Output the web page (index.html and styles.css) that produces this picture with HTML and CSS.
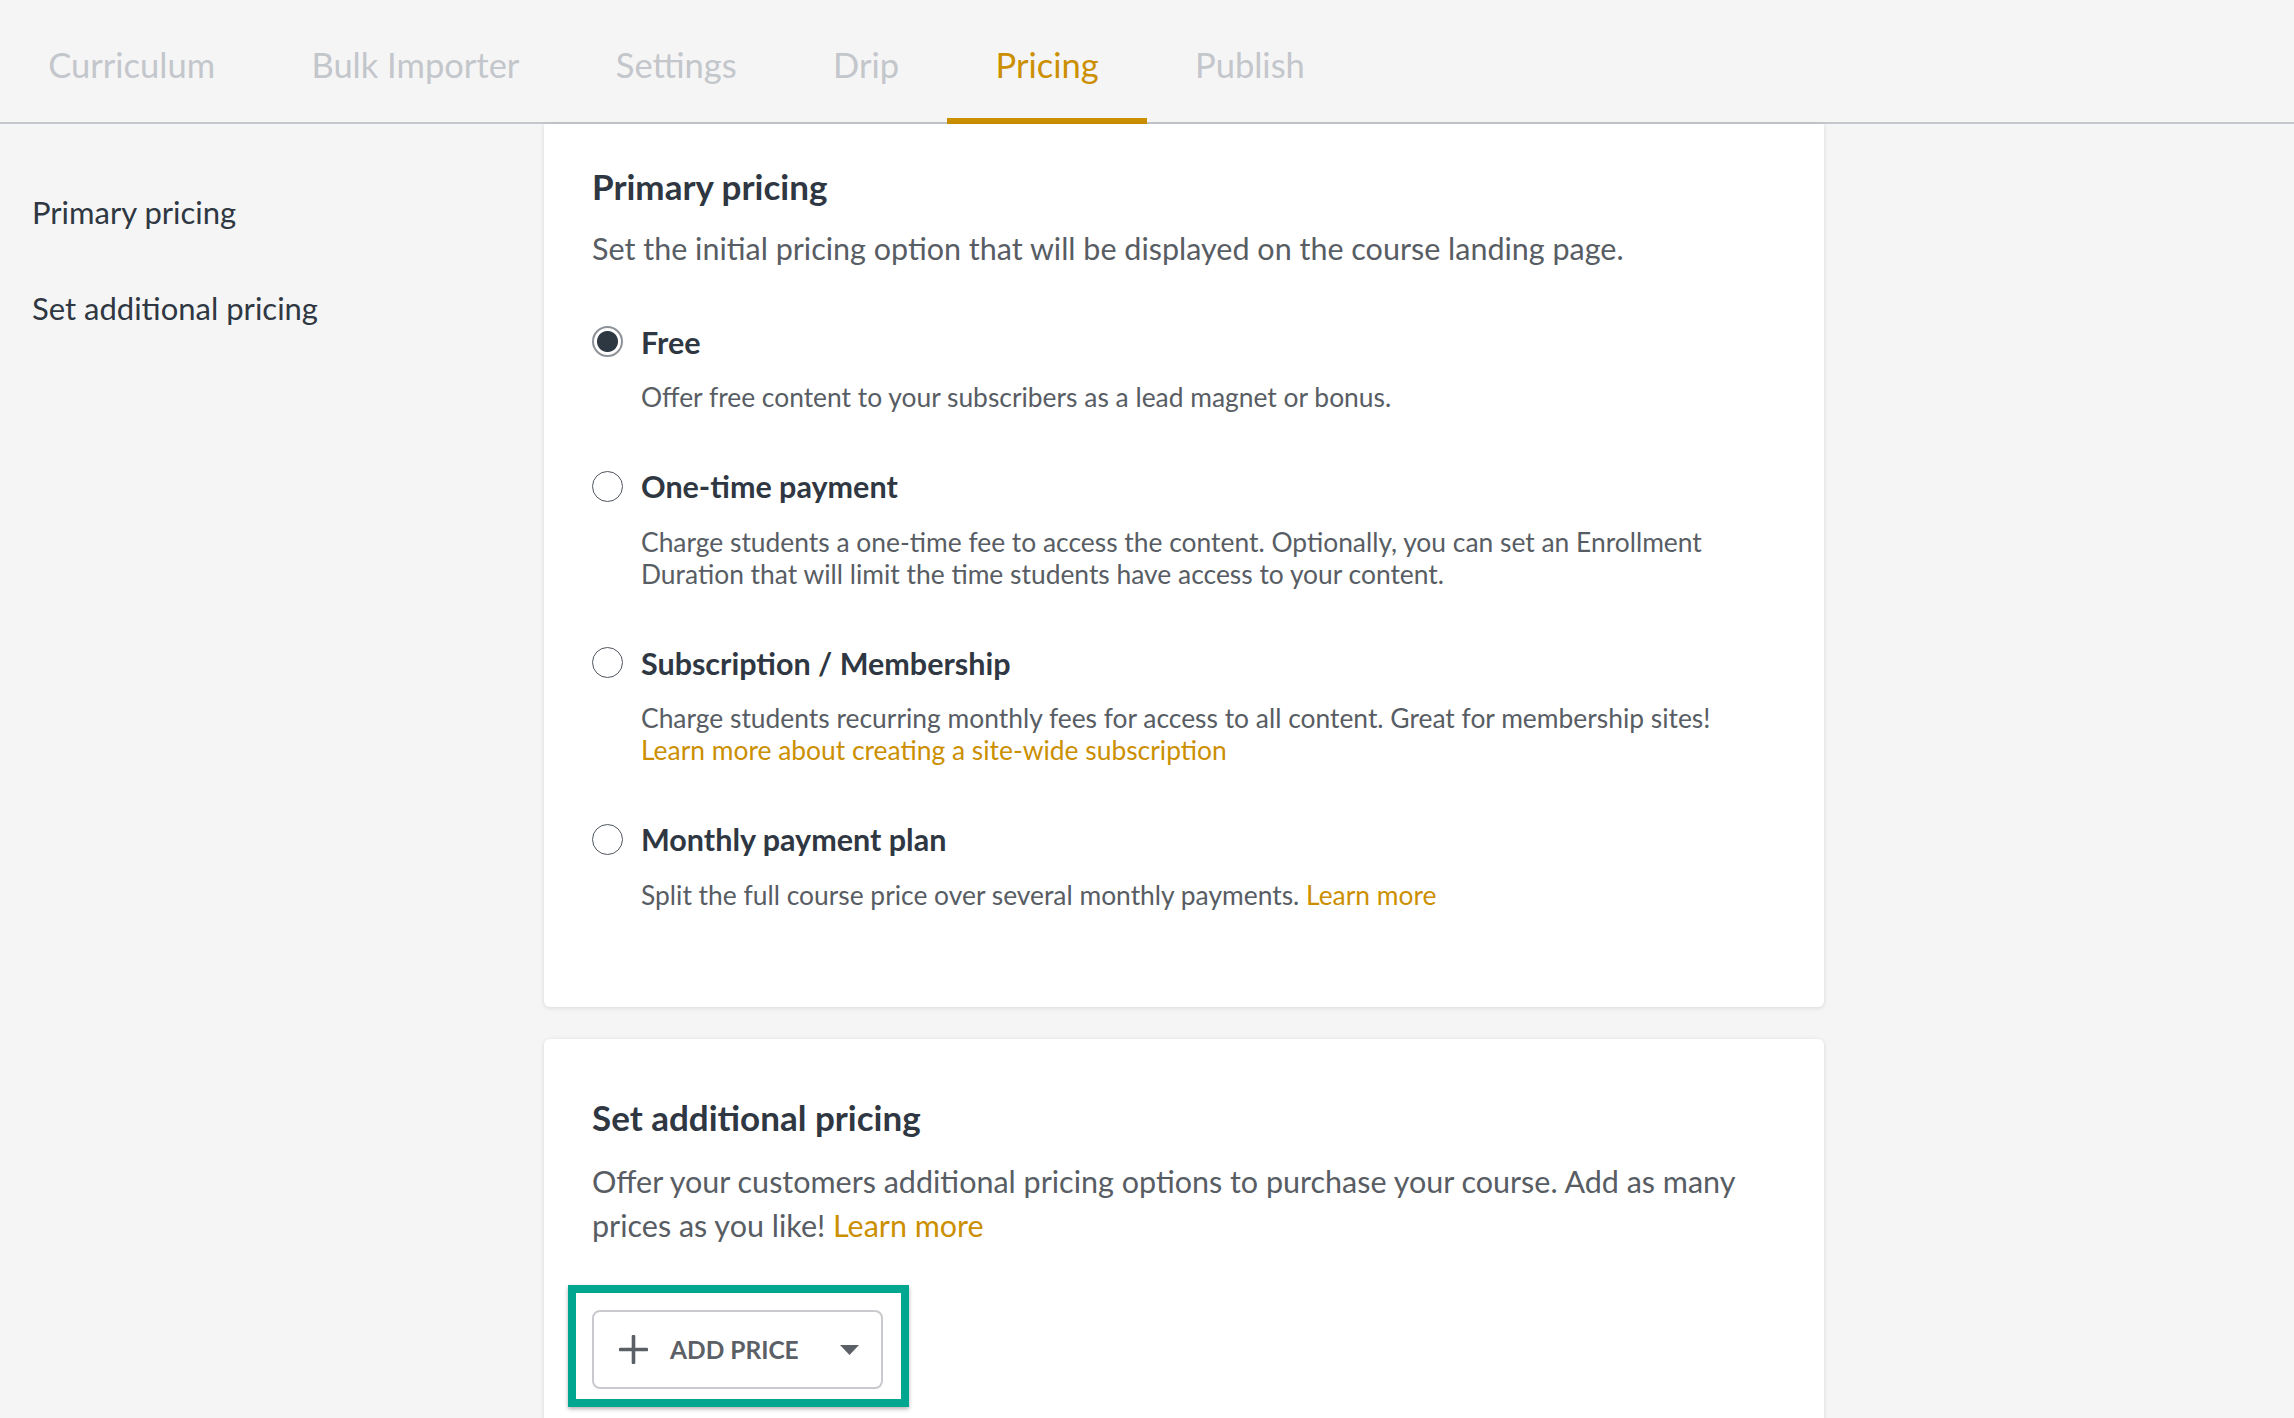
FILE: index.html
```html
<!DOCTYPE html>
<html lang="en">
<head>
  <meta charset="UTF-8" />
  <meta name="viewport" content="width=device-width, initial-scale=1.0"/>
  <title>Pricing</title>
  <link rel="stylesheet" href="styles.css">
</head>
<body>
  <nav class="tabs">
    <a class="tab">Curriculum</a>
    <a class="tab">Bulk Importer</a>
    <a class="tab">Settings</a>
    <a class="tab">Drip</a>
    <a class="tab active">Pricing</a>
    <a class="tab">Publish</a>
  </nav>

  <div class="page">
    <aside class="sidebar">
      <a class="side-link">Primary pricing</a>
      <a class="side-link">Set additional pricing</a>
    </aside>

    <main class="content">
      <section class="card card-primary">
        <h2>Primary pricing</h2>
        <p class="lead">Set the initial pricing option that will be displayed on the course landing page.</p>

        <div class="option">
          <label class="option-label"><span class="radio checked"></span>Free</label>
          <p class="option-desc">Offer free content to your subscribers as a lead magnet or bonus.</p>
        </div>

        <div class="option">
          <label class="option-label"><span class="radio"></span>One-time payment</label>
          <p class="option-desc">Charge students a one-time fee to access the content. Optionally, you can set an Enrollment<br>Duration that will limit the time students have access to your content.</p>
        </div>

        <div class="option">
          <label class="option-label"><span class="radio"></span>Subscription / Membership</label>
          <p class="option-desc">Charge students recurring monthly fees for access to all content. Great for membership sites!<br><a class="link">Learn more about creating a site-wide subscription</a></p>
        </div>

        <div class="option">
          <label class="option-label"><span class="radio"></span>Monthly payment plan</label>
          <p class="option-desc">Split the full course price over several monthly payments. <a class="link">Learn more</a></p>
        </div>
      </section>

      <section class="card card-additional">
        <h2>Set additional pricing</h2>
        <p class="lead lead-lg">Offer your customers additional pricing options to purchase your course. Add as many<br>prices as you like! <a class="link">Learn more</a></p>

        <div class="highlight">
          <button type="button" class="add-btn">
            <svg class="plus" width="29" height="29" viewBox="0 0 29 29"><path d="M14.5 1.5v26M1.5 14.5h26" stroke="#5b5f66" stroke-width="3.6" stroke-linecap="round"/></svg>
            <span>ADD PRICE</span>
            <svg class="caret" width="19" height="10" viewBox="0 0 19 10"><polygon points="0,0 19,0 9.5,10" fill="#5b5f66"/></svg>
          </button>
        </div>
      </section>
    </main>
  </div>
</body>
</html>
```

FILE: styles.css
```css
:root {
  --accent: #cb8f00;
  --heading: #2f3742;
  --text: #585d64;
  --tab-grey: #c3c6cb;
  --line: #c4c7cc;
  --bg: #f5f5f5;
}

* {
  margin: 0;
  padding: 0;
  box-sizing: border-box;
}

body {
  background: var(--bg);
  font-family: Lato, "Open Sans", sans-serif;
  color: var(--heading);
}

.tabs {
  display: flex;
  height: 124px;
  box-shadow: inset 0 -2px 0 var(--line);
}

.tab {
  height: 124px;
  padding: 45px 48.2px 0;
  font-size: 34.5px;
  line-height: 40px;
  color: var(--tab-grey);
  border-bottom: 6px solid transparent;
  cursor: pointer;
}

.tab.active {
  color: var(--accent);
  border-bottom-color: var(--accent);
}

.page {
  display: flex;
}

.sidebar {
  width: 544px;
  flex-shrink: 0;
  padding: 70px 0 0 32px;
  display: flex;
  flex-direction: column;
  gap: 60px;
}

.side-link {
  font-size: 31px;
  line-height: 36px;
  color: var(--heading);
}

.content {
  width: 1280px;
}

.card {
  background: #fff;
  padding: 0 48px;
  box-shadow: 0 1px 5px rgba(0, 0, 0, 0.12);
}

.card-primary {
  padding-top: 41.5px;
  padding-bottom: 96px;
  border-radius: 0 0 6px 6px;
}

.card-additional {
  margin-top: 32px;
  padding-top: 58.5px;
  padding-bottom: 60px;
  border-radius: 6px 6px 0 0;
}

h2 {
  font-size: 35px;
  line-height: 40px;
  font-weight: 700;
  color: var(--heading);
}

.lead {
  margin-top: 24px;
  font-size: 30.5px;
  line-height: 36px;
  color: var(--text);
}

.lead-lg {
  margin-top: 21.7px;
  line-height: 44px;
}

.option {
  margin-top: 58px;
}

.option + .option {
  margin-top: 55px;
}

.option-label {
  display: flex;
  align-items: center;
  gap: 18px;
  font-size: 30.5px;
  line-height: 36px;
  font-weight: 700;
  color: var(--heading);
}

.radio {
  width: 31px;
  height: 31px;
  border-radius: 50%;
  border: 1.5px solid #50565e;
  background: #fff;
  flex-shrink: 0;
}

.radio.checked {
  border: 2px solid #8d9298;
  background: radial-gradient(circle, #2d3843 0 10px, #fff 11px);
}

.option-desc {
  margin: 21.5px 0 0 49px;
  font-size: 26.4px;
  line-height: 32px;
  color: var(--text);
}

.link {
  color: var(--accent);
  cursor: pointer;
}

.highlight {
  display: inline-block;
  margin: 38.8px 0 0 -24px;
  padding: 17px 18px 10px 16px;
  border: 8px solid #00a690;
  box-shadow: 0 2px 4px rgba(0, 0, 0, 0.3);
}

.add-btn {
  display: flex;
  align-items: center;
  width: 291px;
  height: 79px;
  padding: 0 22px 0 25px;
  background: #fff;
  border: 2px solid #c8cacd;
  border-radius: 8px;
  font-family: Lato, "Open Sans", sans-serif;
  font-size: 24.5px;
  font-weight: 700;
  color: #5b5f66;
  cursor: pointer;
}

.add-btn span {
  margin-left: 22px;
}

.add-btn .caret {
  margin-left: auto;
}
```
